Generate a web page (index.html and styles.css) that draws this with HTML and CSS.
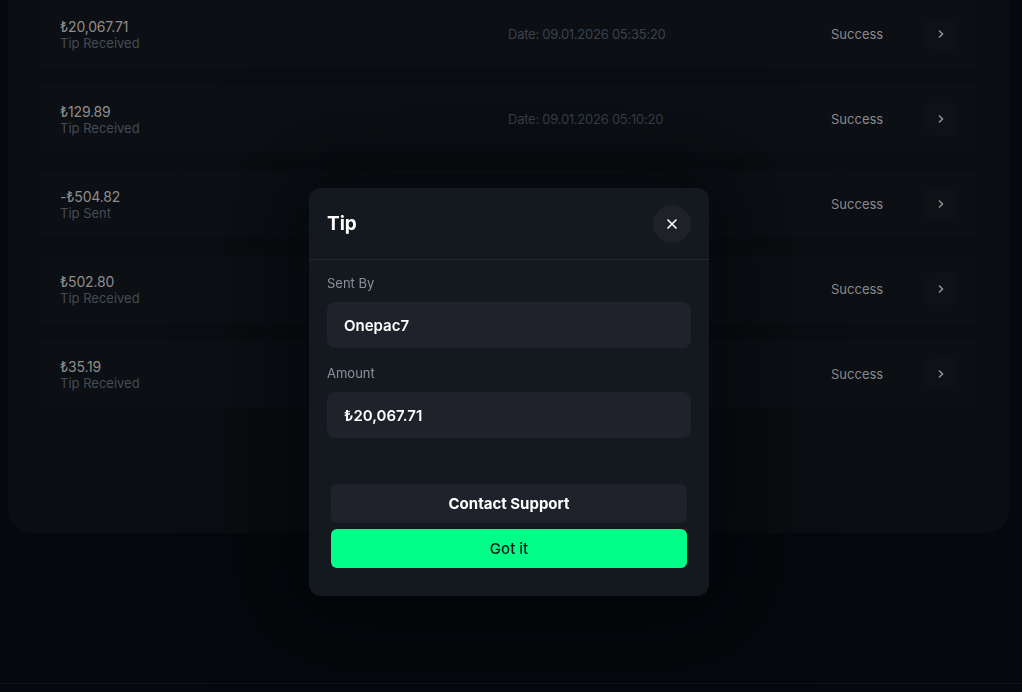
FILE: index.html
```html
<!DOCTYPE html>
<html lang="en">
  <head>
    <meta charset="UTF-8" />
    <meta name="viewport" content="width=device-width, initial-scale=1.0" />
    <title>Transactions</title>
    <link rel="stylesheet" href="styles.css">
  </head>
  <body>
    <main class="page">
      <section class="history">
        <div class="history__list">
          <div class="tx">
            <div class="tx__main">
              <span class="tx__amount">₺20,067.71</span>
              <span class="tx__type">Tip Received</span>
            </div>
            <div class="tx__date">Date: 09.01.2026 05:35:20</div>
            <div class="tx__status">Success</div>
            <button class="tx__more" type="button">
              <svg width="8" height="10" viewBox="0 0 8 10"><path d="M2 1.5L5.5 5L2 8.5" fill="none" stroke="currentColor" stroke-width="1.6"/></svg>
            </button>
          </div>
          <div class="tx">
            <div class="tx__main">
              <span class="tx__amount">₺129.89</span>
              <span class="tx__type">Tip Received</span>
            </div>
            <div class="tx__date">Date: 09.01.2026 05:10:20</div>
            <div class="tx__status">Success</div>
            <button class="tx__more" type="button">
              <svg width="8" height="10" viewBox="0 0 8 10"><path d="M2 1.5L5.5 5L2 8.5" fill="none" stroke="currentColor" stroke-width="1.6"/></svg>
            </button>
          </div>
          <div class="tx">
            <div class="tx__main">
              <span class="tx__amount">-₺504.82</span>
              <span class="tx__type">Tip Sent</span>
            </div>
            <div class="tx__date">Date: 09.01.2026 04:52:11</div>
            <div class="tx__status">Success</div>
            <button class="tx__more" type="button">
              <svg width="8" height="10" viewBox="0 0 8 10"><path d="M2 1.5L5.5 5L2 8.5" fill="none" stroke="currentColor" stroke-width="1.6"/></svg>
            </button>
          </div>
          <div class="tx">
            <div class="tx__main">
              <span class="tx__amount">₺502.80</span>
              <span class="tx__type">Tip Received</span>
            </div>
            <div class="tx__date">Date: 09.01.2026 04:40:03</div>
            <div class="tx__status">Success</div>
            <button class="tx__more" type="button">
              <svg width="8" height="10" viewBox="0 0 8 10"><path d="M2 1.5L5.5 5L2 8.5" fill="none" stroke="currentColor" stroke-width="1.6"/></svg>
            </button>
          </div>
          <div class="tx">
            <div class="tx__main">
              <span class="tx__amount">₺35.19</span>
              <span class="tx__type">Tip Received</span>
            </div>
            <div class="tx__date">Date: 09.01.2026 04:12:47</div>
            <div class="tx__status">Success</div>
            <button class="tx__more" type="button">
              <svg width="8" height="10" viewBox="0 0 8 10"><path d="M2 1.5L5.5 5L2 8.5" fill="none" stroke="currentColor" stroke-width="1.6"/></svg>
            </button>
          </div>
        </div>
      </section>
    </main>
    <footer class="footer"></footer>

    <!-- tip details dialog -->
    <div class="overlay">
      <div class="modal">
        <div class="modal__head">
          <h2 class="modal__title">Tip</h2>
          <button class="modal__close" type="button">
            <svg width="12" height="12" viewBox="0 0 12 12"><path d="M2 2L10 10M10 2L2 10" stroke="currentColor" stroke-width="1.7" stroke-linecap="round"/></svg>
          </button>
        </div>
        <div class="modal__body">
          <div class="field">
            <span class="field__label">Sent By</span>
            <div class="field__value">Onepac7</div>
          </div>
          <div class="field">
            <span class="field__label">Amount</span>
            <div class="field__value">₺20,067.71</div>
          </div>
          <div class="modal__actions">
            <button class="btn btn--dark" type="button">Contact Support</button>
            <button class="btn btn--green" type="button">Got it</button>
          </div>
        </div>
      </div>
    </div>
  </body>
</html>
```

FILE: styles.css
```css
* {
  box-sizing: border-box;
  margin: 0;
  padding: 0;
  font-family: "Inter", "Noto Sans", sans-serif;
}
body {
  background: #05080c;
  height: 692px;
  overflow: hidden;
  display: flex;
  flex-direction: column;
}
button {
  border: 0;
  cursor: pointer;
  font: inherit;
}
.page {
  height: 683px;
  padding: 0 12px 0 8px;
}
.history {
  margin-top: -32px;
  background: #0a0d11;
  border-radius: 0 0 24px 24px;
  padding: 32px 33px 125px 32px;
}
.history__list {
  display: flex;
  flex-direction: column;
  gap: 17px;
}
.tx {
  display: flex;
  align-items: center;
  height: 68px;
  padding: 0 20px;
  background: #0c0f14;
  border-radius: 4px;
}
.tx__main {
  display: flex;
  flex-direction: column;
  width: 448px;
}
.tx__amount {
  font-size: 14px;
  line-height: 17px;
  color: #8f8d8a;
  letter-spacing: -0.2px;
}
.tx__type {
  font-size: 13px;
  line-height: 16px;
  color: #454b53;
}
.tx__date {
  width: 323px;
  font-size: 13px;
  letter-spacing: -0.25px;
  color: #3b424b;
}
.tx__status {
  flex: 1;
  font-size: 13px;
  color: #8a8a8a;
}
.tx__more {
  width: 32px;
  height: 32px;
  border-radius: 6px;
  background: #0e1115;
  color: #8d8d8d;
  display: flex;
  align-items: center;
  justify-content: center;
}
.footer {
  border-top: 1px solid #10141a;
  flex: 1;
}

/* dialog */
.overlay {
  position: fixed;
  inset: 0;
  display: flex;
  justify-content: center;
  align-items: flex-start;
  padding: 188px 4px 0 0;
}
.modal {
  width: 400px;
  background: #141920;
  border-radius: 12px;
  box-shadow: 0 0 90px 30px rgba(2, 4, 6, 0.55);
}
.modal__head {
  display: flex;
  align-items: center;
  justify-content: space-between;
  height: 72px;
  padding: 0 18px;
  border-bottom: 1px solid #222831;
}
.modal__title {
  font-size: 19px;
  font-weight: 700;
  color: #fff;
}
.modal__close {
  width: 38px;
  height: 38px;
  border-radius: 50%;
  background: #1e2128;
  color: #fff;
  display: flex;
  align-items: center;
  justify-content: center;
}
.modal__body {
  padding: 15px 18px 28px;
  display: flex;
  flex-direction: column;
  gap: 17px;
}
.field {
  display: flex;
  flex-direction: column;
  gap: 11px;
}
.field__label {
  font-size: 13px;
  line-height: 16px;
  color: #8b919a;
}
.field__value {
  height: 46px;
  display: flex;
  align-items: center;
  padding: 0 17px;
  background: #1f222a;
  border-radius: 8px;
  font-size: 15px;
  font-weight: 600;
  color: #fff;
}
.modal__actions {
  display: flex;
  flex-direction: column;
  gap: 6px;
  padding: 29px 4px 0;
}
.btn {
  height: 39px;
  border-radius: 6px;
  font-size: 15px;
}
.btn--dark {
  background: #1f222a;
  color: #fff;
  font-weight: 700;
}
.btn--green {
  background: #00fe88;
  color: #0d1a15;
  font-weight: 500;
}
```
